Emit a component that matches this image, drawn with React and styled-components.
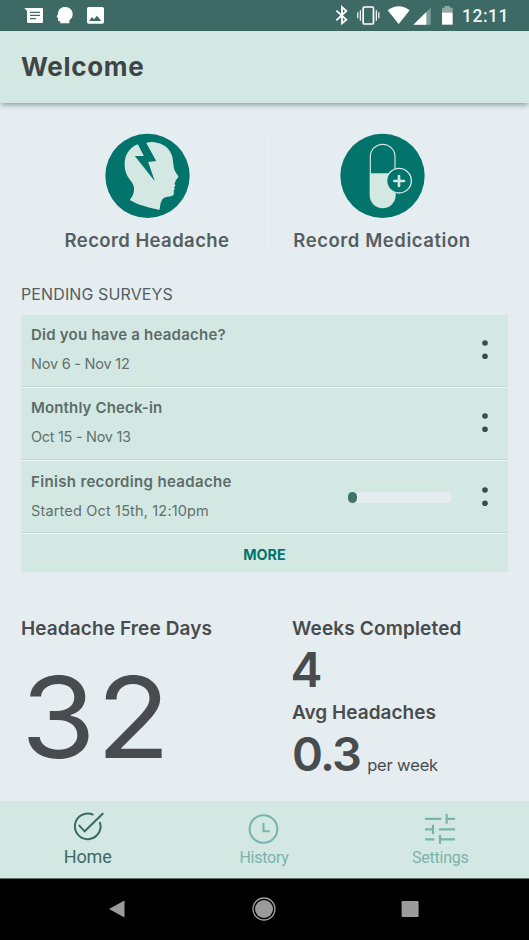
import React from "react";
import styled, { createGlobalStyle } from "styled-components";

const GlobalStyle = createGlobalStyle`
  * { box-sizing: border-box; }
  body { margin: 0; background: #e5edf0; font-family: Inter, "Liberation Sans", sans-serif; }
`;

const mint = "#d3e8e3";
const teal = "#02746b";

const Screen = styled.div`
  width: 529px;
  height: 940px;
  display: flex;
  flex-direction: column;
  background: #e5edf0;
  overflow: hidden;
`;

const StatusBar = styled.div`
  height: 31px;
  padding: 0 20px 0 24px;
  display: flex;
  align-items: center;
  justify-content: space-between;
  background: #3e6a66;
`;

const StatusGroup = styled.div`
  display: flex;
  align-items: center;
  gap: ${(p) => p.$gap || 0}px;
`;

const StatusIcon = styled.svg`
  display: block;
  width: ${(p) => p.$w}px;
  height: 31px;
  margin-right: ${(p) => p.$after || 0}px;
`;

const Clock = styled.span`
  width: 47px;
  font: 500 17.5px/31px Roboto, sans-serif;
  letter-spacing: 0.5px;
  color: #edf4f2;
  white-space: nowrap;
  padding-top: 1px;
`;

const Header = styled.header`
  height: 72px;
  padding-left: 21px;
  display: flex;
  align-items: center;
  background: ${mint};
  box-shadow: 0 3px 5px -1px rgba(60, 80, 84, 0.5);
`;

const Title = styled.h1`
  margin: 0;
  font-size: 26px;
  font-weight: 700;
  line-height: 32px;
  letter-spacing: 0.68px;
  color: #3d4645;
`;

const Main = styled.main`
  flex: 1;
  padding: 30px 21px 0;
  display: flex;
  flex-direction: column;
`;

const Actions = styled.div`
  display: grid;
  grid-template-columns: 235px 235px;
  padding-left: 8px;
`;

const Action = styled.div`
  display: flex;
  flex-direction: column;
  align-items: center;
  gap: 10px;
  border-left: 1px solid ${(p) => (p.$divided ? "#dfe8ec" : "transparent")};
`;

const ActionIcon = styled.svg`
  display: block;
  width: 85px;
  height: 85px;
`;

const ActionLabel = styled.span`
  font-size: 18.5px;
  font-weight: 600;
  line-height: 24px;
  letter-spacing: ${(p) => p.$spacing}px;
  color: #555e60;
`;

const SectionTitle = styled.h2`
  margin: 30px 0 9px;
  font-size: 16px;
  font-weight: 400;
  line-height: 24px;
  letter-spacing: 0.11px;
  color: #555d5f;
`;

const List = styled.div`
  width: 487px;
  background: ${mint};
`;

const Row = styled.div`
  height: 73px;
  padding: 0 20px ${(p) => (p.$last ? 0 : 2)}px 10px;
  display: flex;
  align-items: center;
  border-bottom: 1px solid #e9f5f2;
  box-shadow: inset 0 -1px 0 #c2d8d3;
`;

const RowText = styled.div`
  flex: 1;
  display: flex;
  flex-direction: column;
  gap: 9px;
  padding-bottom: 2px;
`;

const RowTitle = styled.span`
  font-size: 15px;
  font-weight: 600;
  line-height: 20px;
  letter-spacing: ${(p) => p.$spacing}px;
  color: #5d6c69;
`;

const RowDate = styled.span`
  font-size: 14.5px;
  line-height: 20px;
  letter-spacing: ${(p) => p.$spacing}px;
  color: #62706d;
`;

const Dots = styled.svg`
  display: block;
  width: 6px;
  height: 20px;
`;

const Track = styled.div`
  width: 104px;
  height: 11px;
  margin-right: 30px;
  border-radius: 5px;
  background: #e5edf0;
`;

const Fill = styled.div`
  height: 11px;
  border-radius: 4.5px;
  background: #417268;
`;

const More = styled.div`
  height: 38px;
  padding-top: 3px;
  display: flex;
  align-items: center;
  justify-content: center;
  font-size: 14.3px;
  font-weight: 700;
  letter-spacing: 0;
  color: ${teal};
`;

const Stats = styled.div`
  margin-top: 45px;
  display: grid;
  grid-template-columns: 271px 1fr;
  color: #484c4e;
`;

const Stat = styled.div`
  display: flex;
  flex-direction: column;
`;

const StatLabel = styled.span`
  font-size: 19px;
  font-weight: 600;
  line-height: 24px;
  letter-spacing: ${(p) => p.$spacing}px;
`;

const Huge = styled.span`
  margin-top: 20px;
  font-size: 113px;
  line-height: 113px;
  letter-spacing: 0.7px;
  transform: scaleX(1.07);
  transform-origin: left center;
`;

const Figure = styled.div`
  height: 40px;
  margin: ${(p) => p.$top}px 0 11px ${(p) => p.$shift || 0}px;
  display: flex;
  align-items: baseline;
  font-size: ${(p) => p.$size}px;
  font-weight: 600;
  line-height: 40px;
  letter-spacing: ${(p) => p.$spacing || 0}px;
`;

const Unit = styled.span`
  margin-left: 7px;
  font-size: 16.5px;
  font-weight: 400;
  letter-spacing: -0.15px;
`;

const TabBar = styled.nav`
  height: 78px;
  display: grid;
  grid-template-columns: repeat(3, 1fr);
  background: ${mint};
  border-bottom: 1px solid #5d6f6b;
`;

const Tab = styled.div`
  padding-top: ${(p) => (p.$active ? 7 : 9)}px;
  padding-right: 1px;
  display: flex;
  flex-direction: column;
  align-items: center;
  gap: ${(p) => (p.$active ? 2 : 1)}px;
  color: ${(p) => (p.$active ? "#3b6963" : "#7ab3ac")};
`;

const TabIcon = styled.svg`
  display: block;
  width: 36px;
  height: 36px;
`;

const TabLabel = styled.span`
  font-family: Roboto, sans-serif;
  font-size: ${(p) => (p.$active ? 18 : 16)}px;
  line-height: 22px;
  letter-spacing: ${(p) => (p.$active ? -0.1 : -0.25)}px;
`;

const SystemNav = styled.div`
  height: 61px;
  padding: 0 28px 1px;
  display: grid;
  grid-template-columns: 178px 115px 178px;
  align-items: center;
  justify-items: center;
  background: #000;
`;

const NavIcon = styled.svg`
  display: block;
  width: 26px;
  height: 26px;
`;

const surveys = [
  { title: "Did you have a headache?", ts: 0.23, date: "Nov 6 - Nov 12", ds: -0.22 },
  { title: "Monthly Check-in", ts: 0.15, date: "Oct 15 - Nov 13", ds: -0.3 },
  { title: "Finish recording headache", ts: 0.34, date: "Started Oct 15th, 12:10pm", ds: 0.16, progress: 8.5 },
];

function StatusIcons() {
  return (
    <StatusBar>
      <StatusGroup $gap={12}>
        <StatusIcon $w={20} viewBox="72 0 60 93">
          <path fill="#fff" d="M73 24H125Q129 24 129 28V65Q129 69 125 69H85Q81 69 81 65V33Z" />
          <path stroke="#3e6a66" strokeWidth="4" d="M90 37H120M90 46H120M90 56H108" />
        </StatusIcon>
        <StatusIcon $w={18} viewBox="168 0 54 93">
          <path fill="#fff" d="M195 21C209 21 218 30 218 42C218 52 213 57 208 61V70H181V64H177Q174 64 174 60V54L170 50L174 42C174 29 183 21 195 21Z" />
        </StatusIcon>
        <StatusIcon $w={19} viewBox="258 0 57 93">
          <rect x="261" y="21" width="51" height="50" rx="5" fill="#fff" />
          <path fill="#3e6a66" d="M267 63L276 51L282 58L291 47L304 63Z" />
        </StatusIcon>
      </StatusGroup>
      <StatusGroup>
        <StatusIcon $w={14} $after={8} viewBox="207 0 42 93">
          <path fill="none" stroke="#fff" strokeWidth="5.500" d="M214 32L244 59L231 70V21L244 33L214 61" />
        </StatusIcon>
        <StatusIcon $w={25} $after={6} viewBox="273 0 75 93">
          <rect x="294.500" y="21" width="31" height="51" rx="4" fill="none" stroke="#fff" strokeWidth="5" />
          <path stroke="#fff" strokeWidth="3.500" d="M286 31V62M278.500 37V55M334 31V62M341.500 37V55" />
        </StatusIcon>
        <StatusIcon $w={23} $after={2} viewBox="366 0 69 93">
          <path fill="#fff" d="M368 31Q401 7 434 31L403 70Q401 73 399 70Z" />
        </StatusIcon>
        <StatusIcon $w={20} $after={8} viewBox="441 0 60 93">
          <path fill="#7f9f9b" d="M445 74L497 23V74Z" />
          <path fill="#fff" d="M445 74L484 36V74Z" />
        </StatusIcon>
        <StatusIcon $w={14} $after={8} viewBox="525 0 42 93">
          <path fill="#8fa9a6" d="M531 23H539V18H555V23H563V39H531Z" />
          <path fill="#fff" d="M531 38H563V74H531Z" />
        </StatusIcon>
        <Clock>12:11</Clock>
      </StatusGroup>
    </StatusBar>
  );
}

function HeadacheIcon() {
  return (
    <ActionIcon viewBox="192.500 39 255 255">
      <circle cx="320" cy="167.500" r="126.500" fill={teal} />
      <path
        fill={mint}
        d="M291 73C262 84 248 111 252 143C254 162 263 174 274 188C281 198 281 211 277 223C274 233 269 236 267 240C292 256 327 263 356 270C358 255 360 242 366 236C373 230 390 231 397 226C401 222 398 216 399 211L402 206L399 202L404 197L401 191C402 187 406 184 405 181L413 170C409 163 404 157 401 151C399 142 398 138 397 129C397 92 371 66 330 66L316 68L346 123L322 126L342 184L282 108H309Z"
      />
    </ActionIcon>
  );
}

function MedicationIcon() {
  return (
    <ActionIcon viewBox="223 39 255 255">
      <circle cx="350.500" cy="167.500" r="126.500" fill={teal} />
      <path fill={mint} d="M312 160H390V226A39 39 0 0 1 312 226Z" />
      <path fill="none" stroke={mint} strokeWidth="3.500" d="M314 161V110A37 37 0 0 1 388 110V161" />
      <circle cx="400" cy="182" r="37" fill={teal} stroke={mint} strokeWidth="4" />
      <path stroke={mint} strokeWidth="8" strokeLinecap="round" d="M400 168V198M386 183H415" />
    </ActionIcon>
  );
}

export default function App() {
  return (
    <Screen>
      <GlobalStyle />
      <StatusIcons />
      <Header>
        <Title>Welcome</Title>
      </Header>
      <Main>
        <Actions>
          <Action>
            <HeadacheIcon />
            <ActionLabel $spacing={0.41}>Record Headache</ActionLabel>
          </Action>
          <Action $divided>
            <MedicationIcon />
            <ActionLabel $spacing={0.56}>Record Medication</ActionLabel>
          </Action>
        </Actions>
        <SectionTitle>PENDING SURVEYS</SectionTitle>
        <List>
          {surveys.map((s) => (
            <Row key={s.title} $last={Boolean(s.progress)}>
              <RowText>
                <RowTitle $spacing={s.ts}>{s.title}</RowTitle>
                <RowDate $spacing={s.ds}>{s.date}</RowDate>
              </RowText>
              {s.progress && (
                <Track>
                  <Fill style={{ width: s.progress }} />
                </Track>
              )}
              <Dots viewBox="0 0 6 20" fill="#3b4b48">
                <circle cx="3" cy="3" r="2.800" />
                <circle cx="3" cy="16.200" r="2.800" />
              </Dots>
            </Row>
          ))}
          <More>MORE</More>
        </List>
        <Stats>
          <Stat>
            <StatLabel $spacing={0.11}>Headache Free Days</StatLabel>
            <Huge>32</Huge>
          </Stat>
          <Stat>
            <StatLabel $spacing={0.15}>Weeks Completed</StatLabel>
            <Figure $size={48} $top={9} $shift={-1.5}>4</Figure>
            <StatLabel $spacing={0.02}>Avg Headaches</StatLabel>
            <Figure $size={47} $top={9} $spacing={-1.77}>
              0.3<Unit>per week</Unit>
            </Figure>
          </Stat>
        </Stats>
      </Main>
      <TabBar>
        <Tab $active>
          <TabIcon viewBox="206 54 108 108" fill="none" stroke="currentColor" strokeWidth="6">
            <path strokeLinecap="round" d="M274 73.500A38.500 38.500 0 1 0 296 98M234 107L250 124L304 71" />
          </TabIcon>
          <TabLabel $active>Home</TabLabel>
        </Tab>
        <Tab>
          <TabIcon viewBox="740.500 60 108 108" fill="none" stroke="currentColor">
            <circle cx="793" cy="117" r="41.500" strokeWidth="6" />
            <path strokeWidth="6" d="M793 98V124H812" />
          </TabIcon>
          <TabLabel>History</TabLabel>
        </Tab>
        <Tab>
          <TabIcon viewBox="581 60 108 108" fill="none" stroke="currentColor" strokeWidth="6.500">
            <path d="M590 86.500H639M655 86.500H680M655 72V101M590 118H614M614 104V132M632 118H680M590 148H618M635 148H680M635 135V162" />
          </TabIcon>
          <TabLabel>Settings</TabLabel>
        </Tab>
      </TabBar>
      <SystemNav>
        <NavIcon viewBox="0 0 26 26">
          <path fill="#9b9b9b" d="M5 13L20.500 4.500V21.500Z" />
        </NavIcon>
        <NavIcon viewBox="0 0 26 26">
          <circle cx="13" cy="13" r="11" fill="none" stroke="#9b9b9b" strokeWidth="1.300" />
          <circle cx="13" cy="13" r="9" fill="#9b9b9b" />
        </NavIcon>
        <NavIcon viewBox="0 0 26 26">
          <rect x="4.600" y="5" width="17" height="16" rx="1" fill="#9b9b9b" />
        </NavIcon>
      </SystemNav>
    </Screen>
  );
}
